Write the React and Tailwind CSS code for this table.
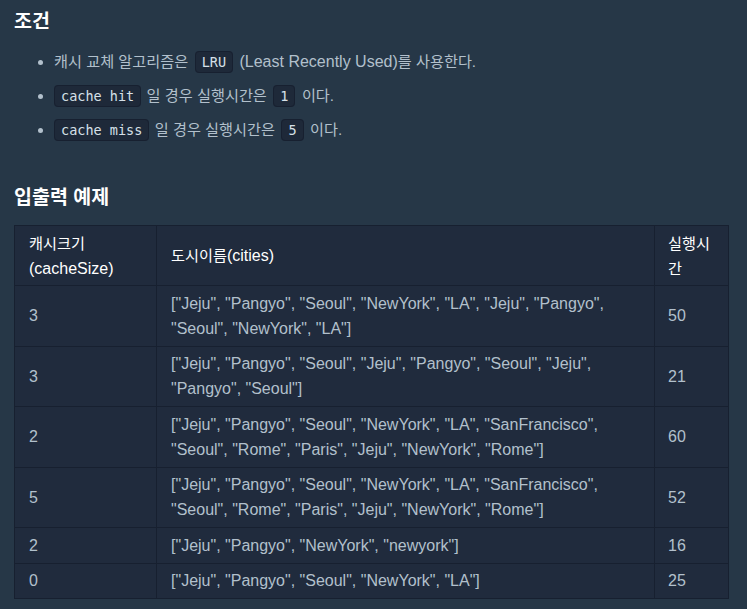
const rows = [
  ['3', '["Jeju", "Pangyo", "Seoul", "NewYork", "LA", "Jeju", "Pangyo", "Seoul", "NewYork", "LA"]', '50'],
  ['3', '["Jeju", "Pangyo", "Seoul", "Jeju", "Pangyo", "Seoul", "Jeju", "Pangyo", "Seoul"]', '21'],
  ['2', '["Jeju", "Pangyo", "Seoul", "NewYork", "LA", "SanFrancisco", "Seoul", "Rome", "Paris", "Jeju", "NewYork", "Rome"]', '60'],
  ['5', '["Jeju", "Pangyo", "Seoul", "NewYork", "LA", "SanFrancisco", "Seoul", "Rome", "Paris", "Jeju", "NewYork", "Rome"]', '52'],
  ['2', '["Jeju", "Pangyo", "NewYork", "newyork"]', '16'],
  ['0', '["Jeju", "Pangyo", "Seoul", "NewYork", "LA"]', '25'],
];

// hangul renders a bit smaller than the latin text in the original
const K = ({ children }) => <span className="text-[15.2px]">{children}</span>;

const Code = ({ children, inline }) => (
  <code className={`${inline ? 'mx-[2px]' : 'mr-[1px]'} rounded-[4px] border border-[#172030] bg-[#1e2939] px-[6px] py-[2px] font-['DejaVu_Sans_Mono',monospace] text-[13.5px] leading-none text-[#d6e0e8]`}>
    {children}
  </code>
);

export default function App() {
  return (
    <div className="min-h-[609px] bg-[#263747] px-[14px] pt-[6px] font-['Liberation_Sans','Noto_Sans_CJK_KR',sans-serif] text-[16px] text-[#b2c0cc]">
      <h3 className="text-[19.5px] font-bold leading-[30px] text-white">조건</h3>
      <ul className="mt-[9px] list-disc pl-[40px] leading-[34px] marker:text-[#b2c0cc]">
        <li><K>캐시 교체 알고리즘은</K> <Code inline>LRU</Code> (Least Recently Used)<K>를 사용한다.</K></li>
        <li><Code>cache hit</Code> <K>일 경우 실행시간은</K> <Code inline>1</Code> <K>이다.</K></li>
        <li><Code>cache miss</Code> <K>일 경우 실행시간은</K> <Code inline>5</Code> <K>이다.</K></li>
      </ul>
      <h3 className="mt-[35px] text-[19.5px] font-bold leading-[30px] text-white">입출력 예제</h3>
      <table className="mt-[13px] w-[715px] border-collapse bg-[#202b3d] leading-[25px]">
        <thead>
          <tr className="text-left text-white">
            <th className="w-[142px] border border-[#172030] px-[14px] py-[4.5px] font-normal"><K>캐시크기</K><br />(cacheSize)</th>
            <th className="border border-[#172030] px-[14px] py-[4.5px] font-normal"><K>도시이름</K>(cities)</th>
            <th className="w-[74px] border border-[#172030] px-[13px] py-[4.5px] font-normal"><K>실행시간</K></th>
          </tr>
        </thead>
        <tbody>
          {rows.map((r, i) => (
            <tr key={i}>
              <td className="border border-[#172030] px-[14px] py-[4.75px]">{r[0]}</td>
              <td className="border border-[#172030] px-[14px] py-[4.75px]">{r[1]}</td>
              <td className="border border-[#172030] px-[13px] py-[4.75px]">{r[2]}</td>
            </tr>
          ))}
        </tbody>
      </table>
    </div>
  );
}
